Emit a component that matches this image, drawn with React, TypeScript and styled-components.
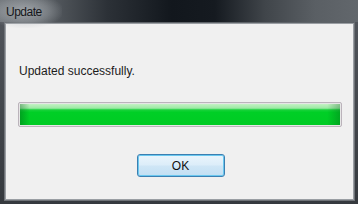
import React from "react";
import styled, { createGlobalStyle } from "styled-components";

const Global = createGlobalStyle`
  html, body { margin: 0; padding: 0; background: #ffffff; }
  body { font-family: "Liberation Sans", Arial, sans-serif; }
`;

const Window = styled.div`
  width: 358px;
  height: 204px;
  box-sizing: border-box;
  display: flex;
  flex-direction: column;
  background: linear-gradient(
    90deg,
    #6d7277 0%,
    #5b6065 12%,
    #2c3137 30%,
    #12171d 48%,
    #151a20 60%,
    #40454a 74%,
    #5a5f64 88%,
    #62676c 100%
  );
  overflow: hidden;
`;

const TitleBar = styled.div`
  height: 22px;
  display: flex;
  align-items: center;
  padding-left: 6px;
  position: relative;
`;

const Glow = styled.div`
  position: absolute;
  left: -12px;
  top: -6px;
  width: 74px;
  height: 34px;
  background: radial-gradient(
    ellipse at center,
    rgba(200, 204, 208, 0.6) 0%,
    rgba(180, 185, 190, 0.35) 45%,
    rgba(160, 165, 170, 0) 75%
  );
`;

const Title = styled.span`
  position: relative;
  font-size: 12px;
  letter-spacing: -0.5px;
  color: #15171a;
  padding-top: 1px;
`;

const FrameBody = styled.div`
  flex: 1;
  display: flex;
  padding: 0 3px 3px 4px;
  background: linear-gradient(180deg, #50545a 0%, #404449 60%, #35393e 100%);
`;

const FrameInner = styled.div`
  flex: 1;
  display: flex;
  padding: 1px;
  border: 1px solid #6f7378;
  border-top-color: #5e6368;
  background: #9a9ea3;
`;

const Panel = styled.div`
  flex: 1;
  display: flex;
  flex-direction: column;
  align-items: stretch;
  background: #f0f0f0;
  padding: 40px 11px 0 12px;
  box-sizing: border-box;
`;

const Message = styled.div`
  font-size: 12px;
  line-height: 15px;
  color: #1c1c1c;
  padding-left: 1px;
`;

const Bar = styled.div`
  margin-top: 23px;
  height: 25px;
  box-sizing: border-box;
  border: 1px solid #bbb3bb;
  border-radius: 2px;
  background: #e6e6e6;
  padding: 1px;
  display: flex;
`;

const Fill = styled.div`
  flex: 1;
  position: relative;
  background: linear-gradient(
    180deg,
    #c4f2c4 0%,
    #9ce8a4 20%,
    #18d23a 28%,
    #00cf26 40%,
    #00cb24 100%
  );
  &::after {
    content: "";
    position: absolute;
    inset: 0;
    background: linear-gradient(
      90deg,
      rgba(0, 80, 20, 0.35) 0%,
      rgba(0, 80, 20, 0) 3%,
      rgba(0, 80, 20, 0) 96%,
      rgba(0, 80, 20, 0.3) 100%
    );
  }
`;

const ButtonRow = styled.div`
  margin-top: 27px;
  display: flex;
  justify-content: center;
`;

const Button = styled.button`
  width: 88px;
  height: 23px;
  box-sizing: border-box;
  margin-left: 1px;
  border: 1px solid #3c7fb1;
  border-radius: 3px;
  box-shadow: inset 0 0 0 1px #6ac8ef;
  background: linear-gradient(180deg, #eaf5fc 0%, #dcedf9 48%, #cfe6f6 52%, #c2dff3 100%);
  font-family: "Liberation Sans", Arial, sans-serif;
  font-size: 12px;
  color: #111;
  padding: 0;
`;

export default function App() {
  return (
    <>
      <Global />
      <Window>
        <TitleBar>
          <Glow />
          <Title>Update</Title>
        </TitleBar>
        <FrameBody>
          <FrameInner>
            <Panel>
              <Message>Updated successfully.</Message>
              <Bar>
                <Fill />
              </Bar>
              <ButtonRow>
                <Button>OK</Button>
              </ButtonRow>
            </Panel>
          </FrameInner>
        </FrameBody>
      </Window>
    </>
  );
}
